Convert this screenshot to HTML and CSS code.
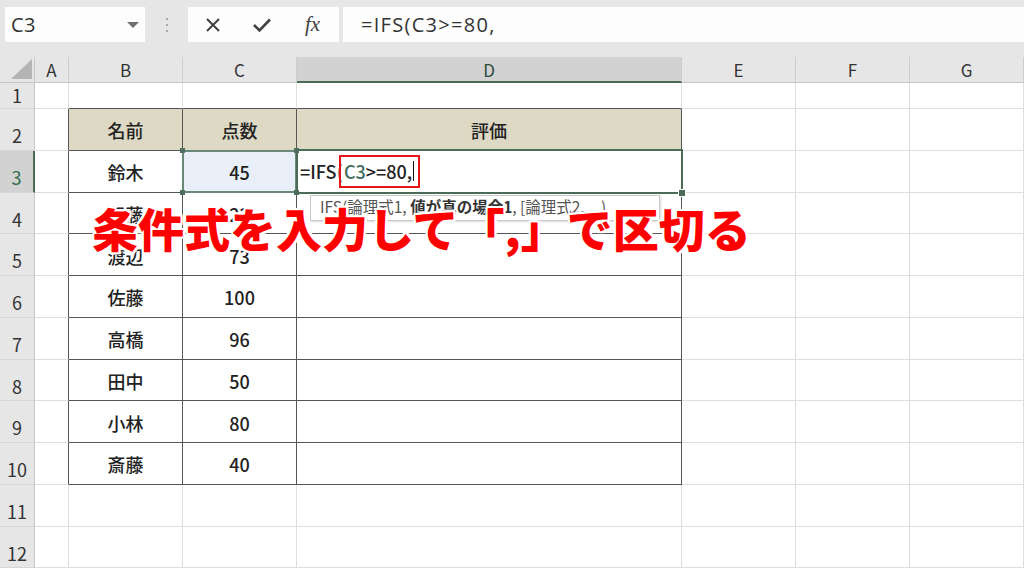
FILE: index.html
```html
<!DOCTYPE html>
<html lang="ja">
<head>
<meta charset="utf-8">
<title>IFS</title>
<link rel="stylesheet" href="styles.css">
</head>
<body>
<div class="app">
  <div class="fbar">
    <div class="namebox"><span class="nm">C3</span><span class="caret"></span></div>
    <div class="grip"><i></i><i></i><i></i></div>
    <div class="btns">
      <svg class="ico" width="18" height="18" viewBox="0 0 18 18"><path d="M3 3 L15 15 M15 3 L3 15" stroke="#404040" stroke-width="2" fill="none"/></svg>
      <svg class="ico" width="20" height="18" viewBox="0 0 20 18"><path d="M2 9 L7.5 14.5 L18 3.5" stroke="#404040" stroke-width="2.6" fill="none"/></svg>
      <span class="fx">fx</span>
    </div>
    <div class="formula">=IFS(C3&gt;=80,</div>
  </div>
  <div class="sheet">
    <div class="corner"><span class="tri"></span></div>
    <div class="ch">A</div><div class="ch">B</div><div class="ch">C</div><div class="ch sel">D</div><div class="ch">E</div><div class="ch">F</div><div class="ch">G</div>

    <div class="rh r1">1</div><div class="c"></div><div class="c et"></div><div class="c et"></div><div class="c et"></div><div class="c"></div><div class="c"></div><div class="c"></div>

    <div class="rh">2</div><div class="c el"></div><div class="c t th">名前</div><div class="c t th">点数</div><div class="c t th">評価</div><div class="c"></div><div class="c"></div><div class="c"></div>

    <div class="rh sel">3</div><div class="c el"></div><div class="c t">鈴木</div>
    <div class="c t ref">45<span class="h h1"></span><span class="h h2"></span><span class="h h3"></span><span class="h h4"></span></div>
    <div class="c t act"><span class="eq">=IFS</span><span class="par">(</span><span class="rb"><span class="refc">C3</span>&gt;=80,<span class="cur"></span></span><span class="hd"></span>
      <div class="tip"><span class="tt">IFS(論理式1, <b>値が真の場合1</b>, [論理式2, ...)</span></div>
    </div>
    <div class="c"></div><div class="c"></div><div class="c"></div>

    <div class="rh">4</div><div class="c el"></div><div class="c t">伊藤</div><div class="c t">22</div><div class="c t"></div><div class="c"></div><div class="c"></div><div class="c"></div>
    <div class="rh">5</div><div class="c el"></div><div class="c t">渡辺</div><div class="c t">73</div><div class="c t"></div><div class="c"></div><div class="c"></div><div class="c"></div>
    <div class="rh">6</div><div class="c el"></div><div class="c t">佐藤</div><div class="c t">100</div><div class="c t"></div><div class="c"></div><div class="c"></div><div class="c"></div>
    <div class="rh">7</div><div class="c el"></div><div class="c t">高橋</div><div class="c t">96</div><div class="c t"></div><div class="c"></div><div class="c"></div><div class="c"></div>
    <div class="rh">8</div><div class="c el"></div><div class="c t">田中</div><div class="c t">50</div><div class="c t"></div><div class="c"></div><div class="c"></div><div class="c"></div>
    <div class="rh">9</div><div class="c el"></div><div class="c t">小林</div><div class="c t">80</div><div class="c t"></div><div class="c"></div><div class="c"></div><div class="c"></div>
    <div class="rh">10</div><div class="c el"></div><div class="c t">斎藤</div><div class="c t">40</div><div class="c t"></div><div class="c"></div><div class="c"></div><div class="c"></div>
    <div class="rh">11</div><div class="c"></div><div class="c"></div><div class="c"></div><div class="c"></div><div class="c"></div><div class="c"></div><div class="c"></div>
    <div class="rh">12</div><div class="c"></div><div class="c"></div><div class="c"></div><div class="c"></div><div class="c"></div><div class="c"></div><div class="c"></div>

    <div class="note">条件式を入力して「,」で区切る</div>
  </div>
</div>
</body>
</html>
```
FILE: styles.css
```css
html, body {
  margin: 0;
  padding: 0;
  background: #fff;
}
body {
  width: 1024px;
  height: 568px;
  overflow: hidden;
  font-family: "Noto Sans CJK JP", "Noto Sans", sans-serif;
  color: #222;
}
.app {
  width: 1024px;
  height: 568px;
  display: flex;
  flex-direction: column;
}

/* formula bar */
.fbar {
  height: 57px;
  flex: none;
  background: #e6e6e6;
  display: flex;
  align-items: flex-start;
  padding-top: 7px;
  box-sizing: border-box;
}
.namebox {
  margin-left: 5px;
  width: 140px;
  height: 35px;
  background: #fdfdfd;
  box-sizing: border-box;
  display: flex;
  align-items: center;
  justify-content: space-between;
  padding: 0 6px 0 6px;
  font-family: "Open Sans", "Noto Sans", sans-serif;
  font-size: 20px;
  letter-spacing: 0.5px;
  color: #333;
}
.caret {
  width: 0;
  height: 0;
  border-left: 6px solid transparent;
  border-right: 6px solid transparent;
  border-top: 6px solid #6e6e6e;
}
.grip {
  width: 43px;
  height: 35px;
  display: flex;
  flex-direction: column;
  align-items: center;
  justify-content: center;
  gap: 4px;
}
.grip i {
  display: block;
  width: 2px;
  height: 2px;
  background: #a8a8a8;
}
.btns {
  width: 151px;
  height: 35px;
  background: #fdfdfd;
  display: flex;
  align-items: center;
  box-sizing: border-box;
  padding-left: 16px;
  gap: 30px;
}
.fx {
  font-family: "Liberation Serif", serif;
  font-style: italic;
  font-size: 21px;
  color: #404040;
  margin-left: 3px;
  line-height: 1;
}
.formula {
  margin-left: 4px;
  flex: 1;
  height: 35px;
  background: #fdfdfd;
  display: flex;
  align-items: center;
  padding-left: 18px;
  font-family: "Open Sans", "Noto Sans", sans-serif;
  font-size: 20px;
  letter-spacing: 1.3px;
  color: #333;
}

/* sheet */
.sheet {
  position: relative;
  flex: 1;
  display: grid;
  grid-template-columns: 35px 34px 114px 114px 385px 114px 114px 114px;
  grid-template-rows: 26px 26px repeat(11, 41.75px);
  overflow: hidden;
}
.corner {
  background: #e6e6e6;
  border-right: 1px solid #c6c6c6;
  border-bottom: 1px solid #c6c6c6;
  box-sizing: border-box;
  position: relative;
}
.tri {
  position: absolute;
  right: 2px;
  bottom: 3px;
  width: 0;
  height: 0;
  border-left: 21px solid transparent;
  border-bottom: 20px solid #b4b4b4;
}
.ch {
  background: #e6e6e6;
  border-right: 1px solid #cdcdcd;
  border-bottom: 1px solid #c6c6c6;
  box-sizing: border-box;
  display: flex;
  align-items: center;
  justify-content: center;
  font-size: 17px;
  color: #333;
}
.ch.sel {
  background: #d2d2d2;
  border-bottom: 2px solid #4a6b58;
  color: #2e4a3a;
}
.rh {
  background: #e6e6e6;
  border-right: 1px solid #c6c6c6;
  border-bottom: 1px solid #d6d6d6;
  box-sizing: border-box;
  display: flex;
  align-items: flex-end;
  justify-content: center;
  padding-bottom: 3px;
  font-size: 18px;
  line-height: 1.2;
  color: #333;
}
.rh.r1 {
  padding-bottom: 1px;
}
.rh.sel {
  background: #d2d2d2;
  border-right: 2px solid #4a6b58;
  color: #2f6b4a;
}
.c {
  border-right: 1px solid #dedede;
  border-bottom: 1px solid #dedede;
  box-sizing: border-box;
  display: flex;
  align-items: center;
  justify-content: center;
  font-size: 18px;
  font-weight: 500;
  color: #222;
  padding-top: 2px;
}
.c.el {
  border-right-color: #555;
}
.c.et {
  border-bottom-color: #555;
}
.c.t {
  border-right-color: #555;
  border-bottom-color: #555;
}
.c.th {
  background: #ddd9c4;
}
.c.ref {
  background: #e9eff8;
  position: relative;
}
.c.ref::after {
  content: "";
  position: absolute;
  left: -1px;
  top: -1px;
  right: -1px;
  bottom: -1px;
  border: 2px solid #6a8878;
}
.h {
  position: absolute;
  width: 5px;
  height: 5px;
  background: #4f6f5e;
  z-index: 2;
}
.h1 { left: -3px; top: -3px; }
.h2 { right: -3px; top: -3px; }
.h3 { left: -3px; bottom: -3px; }
.h4 { right: -3px; bottom: -3px; }

.c.act {
  position: relative;
  justify-content: flex-start;
  padding-left: 3px;
  padding-top: 0;
  z-index: 3;
}
.c.act::after {
  content: "";
  position: absolute;
  left: -1px;
  top: -2px;
  right: -2px;
  bottom: -2px;
  border: 2px solid #4a6b58;
  pointer-events: none;
}
.hd {
  position: absolute;
  right: -5px;
  bottom: -5px;
  width: 6px;
  height: 6px;
  background: #4a6b58;
  border: 1px solid #fff;
  z-index: 4;
}
.par {
  color: #888;
  margin-right: -4px;
}
.rb {
  display: inline-flex;
  align-items: center;
  height: 33px;
  border: 2px solid #e8141b;
  box-sizing: border-box;
  padding-left: 3px;
  padding-right: 4px;
  background: transparent;
}
.refc {
  color: #3f6e5e;
}
.cur {
  display: inline-block;
  width: 1px;
  height: 20px;
  background: #111;
  margin-left: 1px;
}
.tip {
  position: absolute;
  left: 13px;
  top: calc(100% + 3px);
  width: 350px;
  height: 26px;
  box-sizing: border-box;
  background: #fff;
  border: 1px solid #c8c8c8;
  box-shadow: 1px 1px 2px rgba(0,0,0,0.15);
  display: flex;
  align-items: center;
  padding-left: 9px;
  padding-bottom: 3px;
  font-weight: 400;
  font-size: 15.5px;
  color: #555;
  white-space: nowrap;
  overflow: hidden;
}
.tip b {
  color: #333;
  font-weight: 700;
}
.note {
  position: absolute;
  left: 92px;
  top: 147px;
  z-index: 10;
  font-family: "Noto Sans CJK JP", sans-serif;
  font-weight: 900;
  font-size: 46px;
  line-height: 1;
  color: #ff0000;
  white-space: nowrap;
  text-shadow: 0 0 1px #fff, 2px 0 0 #fff, -2px 0 0 #fff, 0 2px 0 #fff, 0 -2px 0 #fff, 2px 2px 0 #fff, -2px -2px 0 #fff, 2px -2px 0 #fff, -2px 2px 0 #fff;
}
```
